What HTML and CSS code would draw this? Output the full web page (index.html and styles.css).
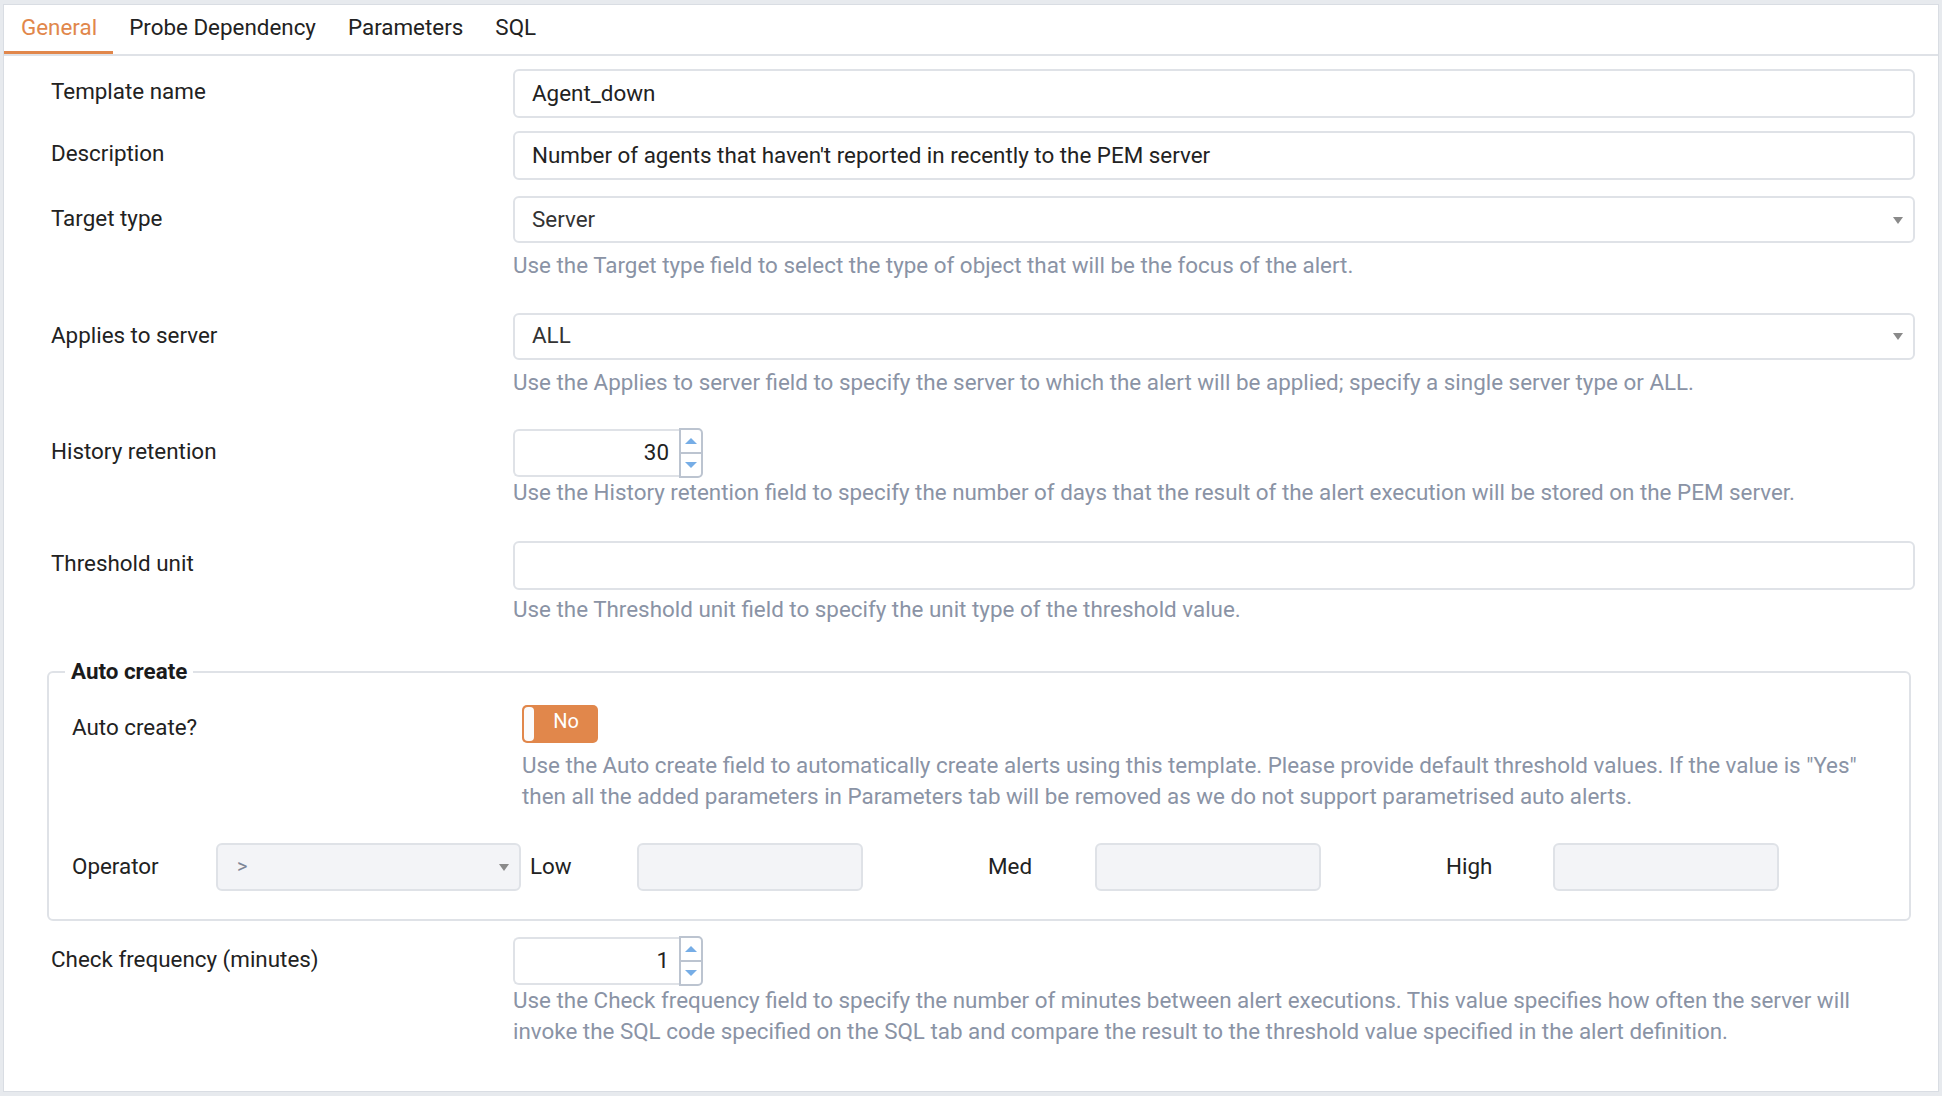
FILE: index.html
```html
<!DOCTYPE html>
<html>
<head>
<meta charset="utf-8">
<title>Alert template</title>
<link rel="stylesheet" href="styles.css">
</head>
<body>
<div class="panel">
  <div class="tabs">
    <div class="tab active">General</div>
    <div class="tab">Probe Dependency</div>
    <div class="tab">Parameters</div>
    <div class="tab">SQL</div>
  </div>
  <div class="form">
    <div class="group mb13">
      <div class="label">Template name</div>
      <div class="control"><div class="input">Agent_down</div></div>
    </div>
    <div class="group mb16">
      <div class="label">Description</div>
      <div class="control"><div class="input">Number of agents that haven't reported in recently to the PEM server</div></div>
    </div>
    <div class="group mb31">
      <div class="label">Target type</div>
      <div class="control">
        <div class="select">Server</div>
        <div class="help help-sel">Use the Target type field to select the type of object that will be the focus of the alert.</div>
      </div>
    </div>
    <div class="group mb31">
      <div class="label">Applies to server</div>
      <div class="control">
        <div class="select">ALL</div>
        <div class="help help-sel">Use the Applies to server field to specify the server to which the alert will be applied; specify a single server type or ALL.</div>
      </div>
    </div>
    <div class="group mb32">
      <div class="label">History retention</div>
      <div class="control">
        <div class="num">
          <div class="num-field">30</div>
          <div class="spin"><div class="spin-up"><span class="tri-up"></span></div><div class="spin-down"><span class="tri-down"></span></div></div>
        </div>
        <div class="help">Use the History retention field to specify the number of days that the result of the alert execution will be stored on the PEM server.</div>
      </div>
    </div>
    <div class="group mb31">
      <div class="label">Threshold unit</div>
      <div class="control">
        <div class="input"></div>
        <div class="help help-input">Use the Threshold unit field to specify the unit type of the threshold value.</div>
      </div>
    </div>

    <fieldset class="fs">
      <legend class="legend">Auto create</legend>
      <div class="group mb30">
        <div class="label fs-label">Auto create?</div>
        <div class="control">
          <div class="toggle"><span class="knob"></span><span class="toggle-text">No</span></div>
          <div class="help help-toggle">Use the Auto create field to automatically create alerts using this template. Please provide default threshold values. If the value is "Yes" then all the added parameters in Parameters tab will be removed as we do not support parametrised auto alerts.</div>
        </div>
      </div>
      <div class="op-row">
        <div class="op-label">Operator</div>
        <div class="op-select">&gt;</div>
        <div class="thr thr-first">
          <div class="thr-label">Low</div>
          <div class="thr-input"></div>
        </div>
        <div class="thr">
          <div class="thr-label">Med</div>
          <div class="thr-input"></div>
        </div>
        <div class="thr">
          <div class="thr-label">High</div>
          <div class="thr-input"></div>
        </div>
      </div>
    </fieldset>

    <div class="group">
      <div class="label">Check frequency (minutes)</div>
      <div class="control">
        <div class="num">
          <div class="num-field">1</div>
          <div class="spin"><div class="spin-up"><span class="tri-up"></span></div><div class="spin-down"><span class="tri-down"></span></div></div>
        </div>
        <div class="help">Use the Check frequency field to specify the number of minutes between alert executions. This value specifies how often the server will invoke the SQL code specified on the SQL tab and compare the result to the threshold value specified in the alert definition.</div>
      </div>
    </div>
  </div>
</div>
</body>
</html>
```
FILE: styles.css
```css
* { box-sizing: border-box; }
html, body { margin: 0; padding: 0; }
body {
  background: #e7eaee;
  font-family: Roboto, "Noto Sans", "Liberation Sans", sans-serif;
  font-size: 22.4px;
  line-height: 31.5px;
  color: #222222;
}
.panel {
  margin: 4px 3px 0 3px;
  width: 1936px;
  height: 1088px;
  background: #ffffff;
  border: 1px solid #d9dde3;
  overflow: hidden;
}
.tabs {
  display: flex;
  border-bottom: 2px solid #dfe2e7;
}
.tab {
  height: 49px;
  padding: 0 16px;
  display: flex;
  align-items: center;
  border-bottom: 3px solid transparent;
  color: #222222;
  white-space: nowrap;
}
.tab.active {
  color: #e1874b;
  border-bottom-color: #e1874b;
  padding-left: 17px;
}
.form {
  padding: 13px 23px 0 47px;
}
.group { display: flex; }
.mb13 { margin-bottom: 13px; }
.mb16 { margin-bottom: 16px; }
.mb30 { margin-bottom: 30px; }
.mb31 { margin-bottom: 31px; }
.mb32 { margin-bottom: 32px; }
.label {
  width: 462px;
  flex: none;
  padding-top: 7px;
  white-space: nowrap;
}
.control { flex: 1; min-width: 0; }
.input {
  height: 49px;
  border: 2px solid #dfe2e7;
  border-radius: 6px;
  padding: 0 17px;
  display: flex;
  align-items: center;
  white-space: nowrap;
  color: #222222;
}
.select {
  position: relative;
  height: 47px;
  border: 2px solid #dfe2e7;
  border-radius: 6px;
  padding: 0 17px;
  display: flex;
  align-items: center;
  color: #333333;
}
.select::after, .op-select::after {
  content: "";
  position: absolute;
  right: 10px;
  top: 50%;
  margin-top: -3px;
  border-left: 5.5px solid transparent;
  border-right: 5.5px solid transparent;
  border-top: 7px solid #8a8a8a;
}
.help {
  color: #8a93a5;
  padding-right: 6px;
}
.help-sel { margin-top: 7px; }
.help-input { margin-top: 4px; }
.help-toggle { margin-top: 7px; }
.num {
  display: flex;
  width: 190px;
  height: 48px;
}
.num-field {
  flex: 1;
  border: 2px solid #dfe2e7;
  border-right: none;
  border-radius: 6px 0 0 6px;
  padding-right: 10px;
  display: flex;
  align-items: center;
  justify-content: flex-end;
  color: #222222;
}
.spin {
  width: 24px;
  height: 50px;
  margin-top: -1px;
  border: 2px solid #bcc4d0;
  border-radius: 0 5px 5px 0;
  display: flex;
  flex-direction: column;
}
.spin-up, .spin-down {
  flex: 1;
  display: flex;
  align-items: center;
  justify-content: center;
}
.spin-up { border-bottom: 2px solid #bcc4d0; }
.tri-up {
  width: 0; height: 0;
  border-left: 6px solid transparent;
  border-right: 6px solid transparent;
  border-bottom: 6px solid #76ade6;
}
.tri-down {
  width: 0; height: 0;
  border-left: 6px solid transparent;
  border-right: 6px solid transparent;
  border-top: 6px solid #76ade6;
}
.fs {
  margin: 0 4px 16px -4px;
  border: 2px solid #dfe2e7;
  border-radius: 6px;
  padding: 17px 23px 28px 23px;
  min-width: 0;
}
.legend {
  font-weight: 700;
  padding: 0 6px;
  margin-left: -7px;
  color: #1b1b1b;
}
.fs-label { width: 450px; }
.toggle {
  width: 76px;
  height: 38px;
  background: #e1874b;
  border-radius: 5px;
  display: flex;
  align-items: center;
}
.knob {
  width: 10px;
  height: 34px;
  margin-left: 2px;
  background: #fbfbfc;
  border-radius: 4px;
}
.toggle-text {
  flex: 1;
  text-align: center;
  color: #ffffff;
  font-size: 20px;
  padding-bottom: 3px;
}
.op-row {
  display: flex;
  align-items: center;
  height: 48px;
}
.op-label { width: 144px; flex: none; }
.op-select {
  position: relative;
  width: 305px;
  height: 48px;
  flex: none;
  background: #f3f4f7;
  border: 2px solid #dfe2e7;
  border-radius: 6px;
  padding-left: 19px;
  display: flex;
  align-items: center;
  color: #7d8696;
  font-size: 20px;
}
.thr {
  display: flex;
  align-items: center;
  width: 458px;
  flex: none;
}
.thr-first { margin-left: 9px; }
.thr-label { width: 107px; flex: none; }
.thr-input {
  width: 226px;
  height: 48px;
  background: #f3f4f7;
  border: 2px solid #dfe2e7;
  border-radius: 6px;
}
```
